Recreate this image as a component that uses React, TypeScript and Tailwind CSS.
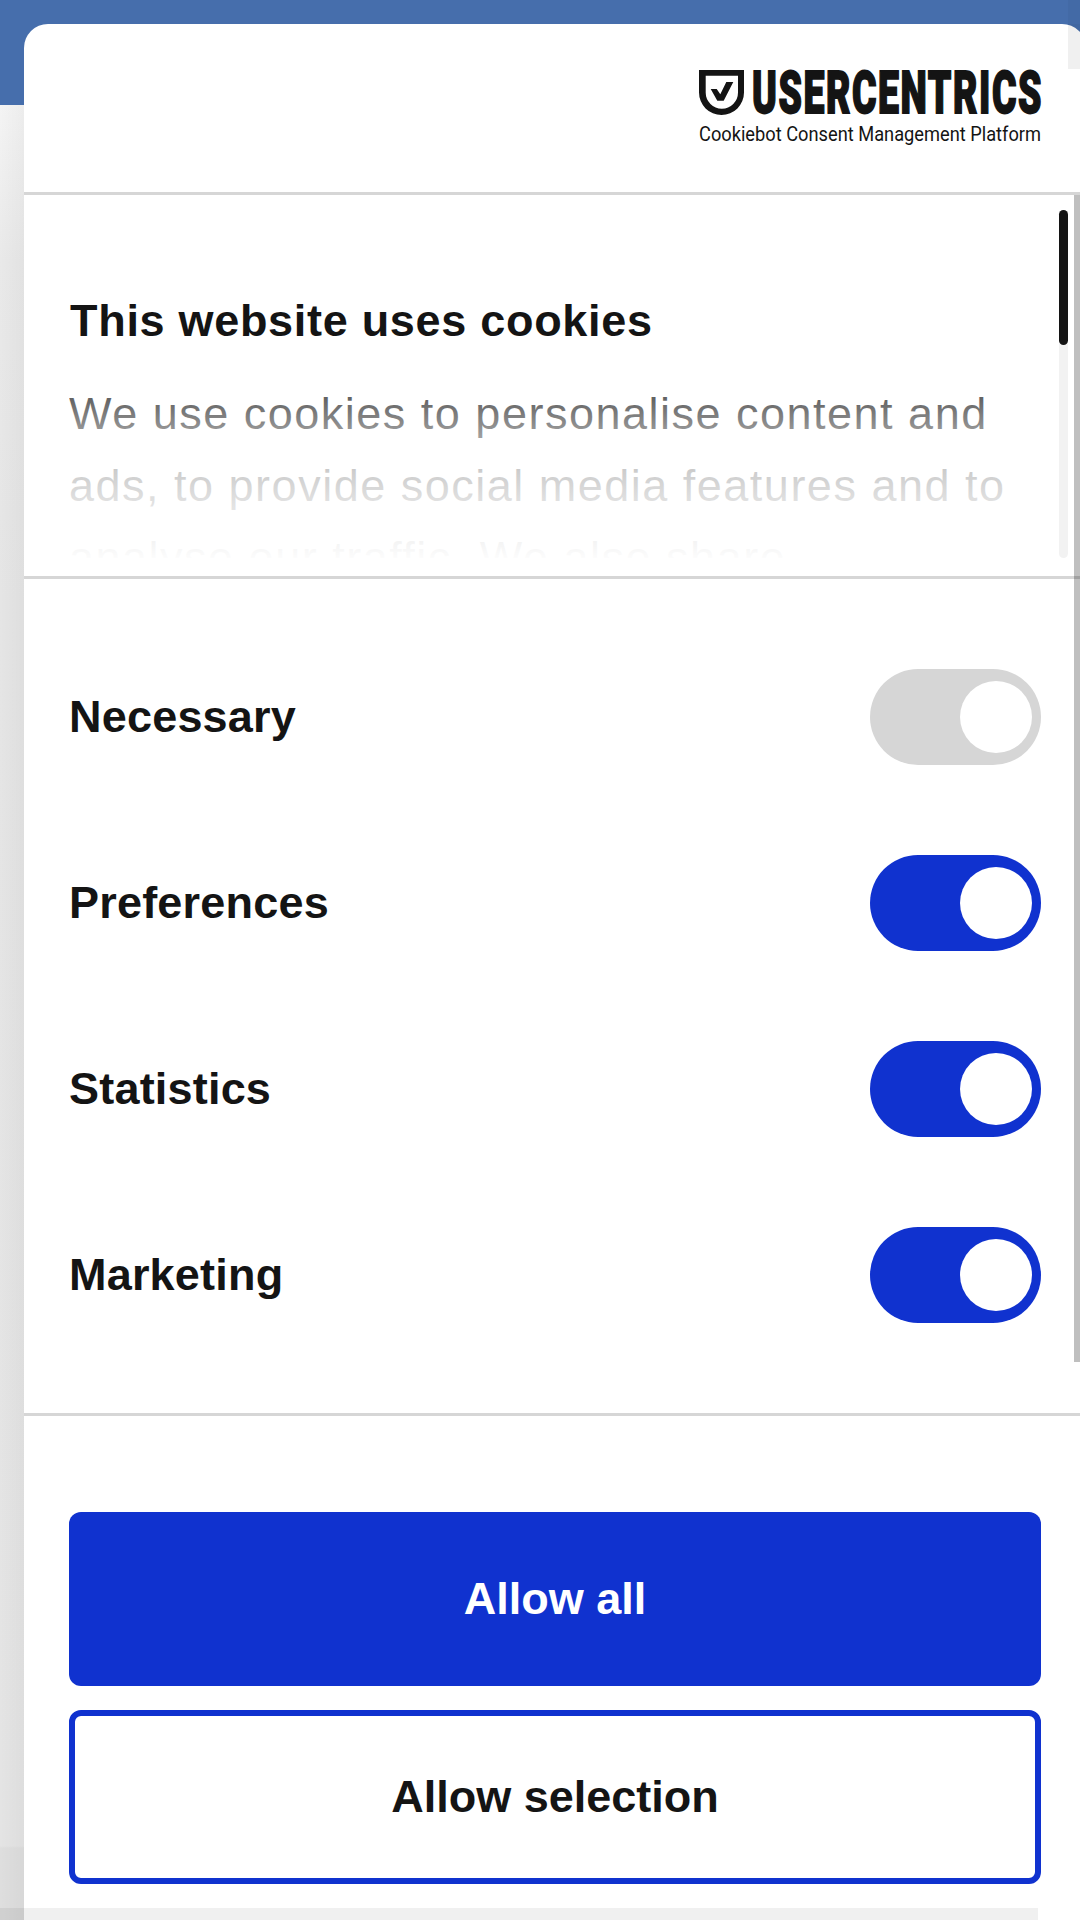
import { useState } from "react";

type Category = {
  id: string;
  label: string;
  locked?: boolean;
};

const CATEGORIES: Category[] = [
  { id: "necessary", label: "Necessary", locked: true },
  { id: "preferences", label: "Preferences" },
  { id: "statistics", label: "Statistics" },
  { id: "marketing", label: "Marketing" },
];

function UsercentricsLogo() {
  return (
    <svg
      width="344"
      height="80"
      viewBox="0 0 344 80"
      fill="#141414"
      className="overflow-visible"
      aria-label="Usercentrics"
    >
      <path
        fillRule="evenodd"
        d="M0 2h45v22.500a22.500 22.500 0 0 1-45 0zM6.700 7.800v16.700a16.150 16.150 0 0 0 32.300 0V7.800z"
      />
      <path d="M11.700 21h6l3.600 5.300 6-12.300h7l-9.600 18.700h-6.400z" />
      <text
        x="53"
        y="45.300"
        textLength="291"
        lengthAdjust="spacingAndGlyphs"
        stroke="#141414"
        strokeWidth="1.800"
        className="font-['Roboto'] text-[60px] font-black tracking-[2.500px]"
      >
        USERCENTRICS
      </text>
      <text
        x="0"
        y="72.700"
        textLength="342"
        lengthAdjust="spacingAndGlyphs"
        className="font-['Roboto'] text-[20.500px] font-normal"
      >
        Cookiebot Consent Management Platform
      </text>
    </svg>
  );
}

function Toggle({ on, locked, onClick }: { on: boolean; locked?: boolean; onClick: () => void }) {
  const tone = locked ? "bg-[#d6d6d6]" : on ? "bg-[#1032cf]" : "bg-[#141414]";
  return (
    <button
      type="button"
      role="switch"
      aria-checked={on}
      disabled={locked}
      onClick={onClick}
      className={`flex h-24 w-[171px] items-center rounded-full px-[9px] ${on ? "justify-end" : "justify-start"} ${tone}`}
    >
      <span className="size-[72px] rounded-full bg-white" />
    </button>
  );
}

export default function App() {
  const [enabled, setEnabled] = useState<Record<string, boolean>>({
    necessary: true,
    preferences: true,
    statistics: true,
    marketing: true,
  });

  const toggle = (id: string) => setEnabled((prev) => ({ ...prev, [id]: !prev[id] }));

  return (
    <div className="relative h-[1920px] w-[1080px] overflow-hidden bg-[linear-gradient(to_bottom,#f4f4f4_105px,#e9e9e9_260px,#e5e5e5_600px,#e4e4e4_1846px,#dedede_1848px)] pt-6 pl-6 font-['Liberation_Sans',Arial,sans-serif] text-[45px] text-[#141414]">
      {/* page behind the dialog */}
      <div className="absolute inset-x-0 top-0 h-[105px] bg-[#466eac]" />
      <div className="absolute top-[105px] bottom-0 left-0 w-6 bg-gradient-to-r from-black/0 to-black/3" />

      <div className="relative flex h-[1896px] w-[1062px] flex-col overflow-hidden rounded-t-[24px] bg-white">
        <header className="flex h-[171px] shrink-0 justify-end border-b-[3px] border-[#d6d6d6] pt-[44px] pr-[43px]">
          <UsercentricsLogo />
        </header>

        <section className="flex h-[384px] shrink-0 border-b-[3px] border-[#d6d6d6] pl-[45px]">
          <div className="relative h-[363px] w-[975px] overflow-hidden pt-[90px]">
            <h2 className="pl-px text-[45px] leading-[72px] font-bold tracking-[0.7px]">This website uses cookies</h2>
            <p className="mt-[21px] w-[960px] leading-[72px] tracking-[1.5px]">
              We use cookies to personalise content and ads, to provide social media features and to
              <br />
              analyse our traffic. We also share
            </p>
            <div className="absolute inset-x-0 bottom-0 h-[216px] bg-[linear-gradient(to_bottom,rgba(255,255,255,0)_0%,rgba(255,255,255,0.32)_25%,rgba(255,255,255,0.54)_40%,rgba(255,255,255,0.79)_60%,rgba(255,255,255,0.88)_75%,rgba(255,255,255,0.94)_90%,rgba(255,255,255,0.99)_100%)]" />
          </div>
          <div className="mt-[15px] ml-[15px] h-[348px] w-[9px] rounded-full bg-[#f2f2f2]">
            <div className="h-[135px] rounded-full bg-[#141414]" />
          </div>
        </section>

        <section className="flex h-[837px] shrink-0 flex-col gap-[90px] border-b-[3px] border-[#d6d6d6] pt-[90px] pr-[45px] pl-[45px]">
          {CATEGORIES.map((c) => (
            <div key={c.id} className="flex h-24 items-center justify-between">
              <strong className="tracking-[0.2px]">{c.label}</strong>
              <Toggle on={enabled[c.id]} locked={c.locked} onClick={() => toggle(c.id)} />
            </div>
          ))}
        </section>

        <footer className="flex shrink-0 flex-col gap-6 pt-24 pr-[45px] pl-[45px] font-bold">
          <button type="button" className="h-[174px] rounded-[12px] bg-[#1032cf] text-white">
            Allow all
          </button>
          <button type="button" className="h-[174px] rounded-[12px] border-[6px] border-[#1032cf]">
            Allow selection
          </button>
        </footer>
      </div>

      {/* page scrollbars */}
      <div className="absolute top-[195px] right-0 h-[1167px] w-[6px] bg-black/25" />
      <div className="absolute top-0 right-0 h-6 w-[12px] bg-black/3" />
      <div className="absolute top-6 right-0 h-[45px] w-[12px] bg-black/6" />
      <div className="absolute bottom-0 left-0 h-[12px] w-[1038px] bg-black/6" />
    </div>
  );
}
